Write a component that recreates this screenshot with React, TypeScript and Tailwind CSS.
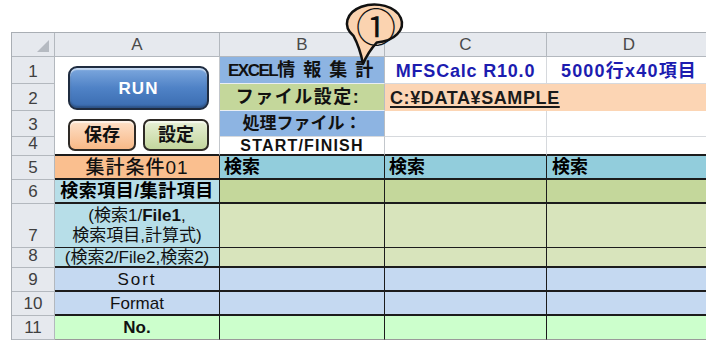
import React from "react";

const hdr =
  "shrink-0 flex items-center justify-center bg-[#e6e9ee] border-r border-b border-[#b3b8be] text-[17px] leading-none text-[#4a4a4a]";
const rn =
  "w-[43px] shrink-0 flex items-end justify-center pb-[3px] bg-[#e6e9ee] border-r border-b border-[#b3b8be] text-[17px] leading-none text-[#404040]";
const gA = "w-[165px] shrink-0 border-r border-[#c3c7cc]";
const dk = "shrink-0 border-r border-b-2 border-[#1c1c1c] flex items-center";
const dk1 = "shrink-0 border-r border-b border-[#1c1c1c] flex items-center";

export default function App() {
  return (
    <div className="relative w-[706px] h-[351px] overflow-hidden bg-white font-['Liberation_Sans','Noto_Sans_CJK_JP',sans-serif] text-black">
      <div className="pt-[32px] pl-[11px]">
        <div className="w-[720px] border-t border-l border-[#a9aeb4]">
          {/* column header */}
          <div className="flex h-[24px]">
            <div className="w-[43px] shrink-0 flex items-end justify-end pr-[5px] pb-[4px] bg-[#e6e9ee] border-r border-b border-[#b3b8be]">
              <div className="w-0 h-0 border-l-[12px] border-l-transparent border-b-[12px] border-b-[#b5bac1]" />
            </div>
            <div className={`w-[165px] ${hdr}`}>A</div>
            <div className={`w-[165px] ${hdr}`}>B</div>
            <div className={`w-[162px] ${hdr}`}>C</div>
            <div className={`w-[165px] ${hdr}`}>D</div>
          </div>

          {/* row 1 */}
          <div className="flex h-[27px]">
            <div className={rn}>1</div>
            <div className={gA} />
            <div className="w-[165px] shrink-0 bg-[#8db4e2] border-r border-r-[#b9bdc2] border-b border-b-[#e9eef4] flex items-center pl-[8px] text-[18px] leading-none font-bold text-[#111]">
              <span className="tracking-[-1.5px] text-[17px]">EXCEL</span>
              <span className="tracking-[8px]">情報集計</span>
            </div>
            <div className="w-[162px] shrink-0 border-r border-b border-[#d6d9dd] flex items-center justify-center pt-[2px] text-[18px] leading-none font-bold tracking-[0.8px] text-[#1c1cb0]">
              MFSCalc R10.0
            </div>
            <div className="w-[165px] shrink-0 border-r border-b border-[#d6d9dd] flex items-center justify-center pt-[2px] text-[18px] leading-none font-bold tracking-[1.2px] text-[#1c1cb0]">
              5000行x40項目
            </div>
          </div>

          {/* row 2 */}
          <div className="flex h-[27px]">
            <div className={rn}>2</div>
            <div className={gA} />
            <div className="w-[165px] shrink-0 bg-[#c4d79b] border-r border-r-[#b9bdc2] border-b border-b-[#e9eef4] flex items-center justify-center pr-[8px] text-[18px] leading-none font-bold tracking-[1.5px] text-[#111]">
              ファイル設定:
            </div>
            <div className="w-[327px] shrink-0 bg-[#fcd5b4] flex items-center pl-[5px] text-[18px] leading-none font-bold tracking-[0.6px] text-[#1a1a1a] underline decoration-2 underline-offset-2">
              C:¥DATA¥SAMPLE
            </div>
          </div>

          {/* row 3 */}
          <div className="flex h-[26px]">
            <div className={rn}>3</div>
            <div className={gA} />
            <div className="w-[165px] shrink-0 bg-[#8db4e2] border-r border-r-[#b9bdc2] border-b border-b-[#d6d9dd] flex items-center justify-center text-[17px] leading-none font-bold text-[#111]">
              処理ファイル：
            </div>
            <div className="w-[162px] shrink-0 border-r border-b border-[#d6d9dd]" />
            <div className="w-[165px] shrink-0 border-r border-b border-[#d6d9dd]" />
          </div>

          {/* row 4 */}
          <div className="flex h-[19px]">
            <div className={rn}>4</div>
            <div className="w-[165px] shrink-0 border-r border-r-[#c3c7cc] border-b-2 border-b-[#1c1c1c]" />
            <div className="w-[165px] shrink-0 border-r border-r-[#c3c7cc] border-b-2 border-b-[#1c1c1c] flex items-center justify-center text-[16px] leading-none font-bold tracking-[1.2px] text-[#111]">
              START/FINISH
            </div>
            <div className="w-[162px] shrink-0 border-r border-r-[#d6d9dd] border-b-2 border-b-[#1c1c1c]" />
            <div className="w-[165px] shrink-0 border-r border-r-[#d6d9dd] border-b-2 border-b-[#1c1c1c]" />
          </div>

          {/* row 5 */}
          <div className="flex h-[24px]">
            <div className={rn}>5</div>
            <div className={`w-[165px] bg-[#fabf8f] justify-center text-[19px] leading-none font-medium tracking-[1px] text-[#111] ${dk}`}>
              集計条件01
            </div>
            <div className={`w-[165px] bg-[#92cddc] pl-[4px] text-[18px] leading-none font-bold ${dk}`}>検索</div>
            <div className={`w-[162px] bg-[#92cddc] pl-[4px] text-[18px] leading-none font-bold ${dk}`}>検索</div>
            <div className={`w-[165px] bg-[#92cddc] pl-[5px] text-[18px] leading-none font-bold ${dk}`}>検索</div>
          </div>

          {/* row 6 */}
          <div className="flex h-[24px]">
            <div className={rn}>6</div>
            <div className={`w-[165px] bg-[#b7dee8] justify-center text-[18px] leading-none font-bold tracking-[0.5px] ${dk}`}>
              検索項目/集計項目
            </div>
            <div className={`w-[165px] bg-[#c4d79b] ${dk}`} />
            <div className={`w-[162px] bg-[#c4d79b] ${dk}`} />
            <div className={`w-[165px] bg-[#c4d79b] ${dk}`} />
          </div>

          {/* row 7 */}
          <div className="flex h-[44px]">
            <div className={rn}>7</div>
            <div className={`w-[165px] bg-[#b7dee8] flex-col justify-center text-[17px] leading-[20px] text-[#111] ${dk1}`}>
              <span>
                (検索1/<b>File1</b>,
              </span>
              <span>検索項目,計算式)</span>
            </div>
            <div className={`w-[165px] bg-[#d8e4bc] ${dk1}`} />
            <div className={`w-[162px] bg-[#d8e4bc] ${dk1}`} />
            <div className={`w-[165px] bg-[#d8e4bc] ${dk1}`} />
          </div>

          {/* row 8 */}
          <div className="flex h-[20px]">
            <div className={rn}>8</div>
            <div className={`w-[165px] bg-[#b7dee8] justify-center text-[17px] leading-none text-[#111] ${dk}`}>
              (検索2/File2,検索2)
            </div>
            <div className={`w-[165px] bg-[#d8e4bc] ${dk}`} />
            <div className={`w-[162px] bg-[#d8e4bc] ${dk}`} />
            <div className={`w-[165px] bg-[#d8e4bc] ${dk}`} />
          </div>

          {/* row 9 */}
          <div className="flex h-[24px]">
            <div className={rn}>9</div>
            <div className={`w-[165px] bg-[#c5d9f1] justify-center text-[17px] leading-none tracking-[2px] text-[#111] ${dk}`}>Sort</div>
            <div className={`w-[165px] bg-[#c5d9f1] ${dk}`} />
            <div className={`w-[162px] bg-[#c5d9f1] ${dk}`} />
            <div className={`w-[165px] bg-[#c5d9f1] ${dk}`} />
          </div>

          {/* row 10 */}
          <div className="flex h-[24px]">
            <div className={rn}>10</div>
            <div className={`w-[165px] bg-[#c5d9f1] justify-center text-[17px] leading-none text-[#111] ${dk}`}>Format</div>
            <div className={`w-[165px] bg-[#c5d9f1] ${dk}`} />
            <div className={`w-[162px] bg-[#c5d9f1] ${dk}`} />
            <div className={`w-[165px] bg-[#c5d9f1] ${dk}`} />
          </div>

          {/* row 11 */}
          <div className="flex h-[24px]">
            <div className={rn}>11</div>
            <div className="w-[165px] shrink-0 bg-[#ccffcc] border-r border-r-[#1c1c1c] border-b border-b-[#9a9a9a] flex items-center justify-center text-[17px] leading-none font-bold text-[#111]">
              No.
            </div>
            <div className="w-[165px] shrink-0 bg-[#ccffcc] border-r border-r-[#1c1c1c] border-b border-b-[#9a9a9a]" />
            <div className="w-[162px] shrink-0 bg-[#ccffcc] border-r border-r-[#1c1c1c] border-b border-b-[#9a9a9a]" />
            <div className="w-[165px] shrink-0 bg-[#ccffcc] border-r border-r-[#1c1c1c] border-b border-b-[#9a9a9a]" />
          </div>
        </div>
      </div>

      {/* floating buttons */}
      <div className="absolute left-[68px] top-[66px] w-[141px] h-[44px] rounded-[9px] border-2 border-[#1f2c40] bg-gradient-to-b from-[#7da8de] via-[#4f82c6] to-[#3a6cb0] shadow-[inset_0_2px_1px_rgba(255,255,255,0.55),inset_0_-2px_2px_rgba(0,0,0,0.25)] flex items-center justify-center text-white text-[17px] leading-none font-bold tracking-[1px]">
        RUN
      </div>
      <div className="absolute left-[68px] top-[119px] w-[68px] h-[32px] rounded-[7px] border-2 border-[#2e2a26] bg-gradient-to-b from-[#fde0c8] to-[#f8b987] shadow-[inset_0_2px_1px_rgba(255,255,255,0.6)] flex items-center justify-center text-[18px] leading-none font-bold text-[#111]">
        保存
      </div>
      <div className="absolute left-[143px] top-[119px] w-[66px] h-[32px] rounded-[7px] border-2 border-[#2e2a26] bg-gradient-to-b from-[#e8f0d6] to-[#c3d69d] shadow-[inset_0_2px_1px_rgba(255,255,255,0.6)] flex items-center justify-center text-[18px] leading-none font-bold text-[#111]">
        設定
      </div>

      {/* callout */}
      <svg className="absolute left-[340px] top-0" width="80" height="70" viewBox="0 0 80 70">
        <path
          d="M 36.9 42.4 Q 28 52 23 64 Q 20 48 13.4 35.7 A 27.5 19 0 1 1 36.9 42.4 Z"
          fill="#fbd3b0"
          stroke="#111"
          strokeWidth="2.5"
          strokeLinejoin="round"
        />
      </svg>
      <div className="absolute left-[346px] top-0 w-[60px] h-[50px] flex items-center justify-center font-['Noto_Sans_CJK_JP',sans-serif] text-[40px] leading-none text-[#111]">
        ①
      </div>
    </div>
  );
}
